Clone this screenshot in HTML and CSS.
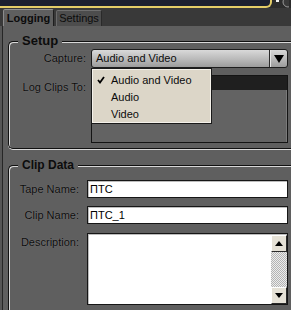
FILE: index.html
```html
<!DOCTYPE html>
<html lang="en">
<head>
    <meta charset="UTF-8">
    <title>Logging</title>
    <link rel="stylesheet" href="styles.css">
</head>
<body>
<div class="top">
    <div class="top-frame"></div>
    <div class="top-ctl">
        <svg width="17" height="8" viewBox="0 0 17 8">
            <rect x="4" y="0" width="3" height="2" fill="#f2f2f2"/>
            <circle cx="16" cy="2" r="5" fill="#3a3a3a" stroke="#9a9a9a" stroke-width="1"/>
        </svg>
    </div>
</div>

<div class="tabs">
    <div class="tab active">Logging</div>
    <div class="tab">Settings</div>
</div>

<div class="panel">
    <div class="group setup">
        <div class="legend">Setup</div>
        <div class="row">
            <div class="lbl">Capture:</div>
            <div class="select">
                <span class="select-text">Audio and Video</span>
                <span class="select-btn"><span class="tri-down"></span></span>
                <div class="menu">
                    <div class="item"><span class="check">
                        <svg width="8" height="8" viewBox="0 0 8 8"><polyline points="1,4 3,6.5 7,1" fill="none" stroke="#000" stroke-width="1.8"/></svg>
                    </span>Audio and Video</div>
                    <div class="item"><span class="check"></span>Audio</div>
                    <div class="item"><span class="check"></span>Video</div>
                </div>
            </div>
        </div>
        <div class="row log">
            <div class="lbl">Log Clips To:</div>
            <div class="clipbox"><div class="clipbar"></div></div>
        </div>
    </div>

    <div class="group clip">
        <div class="legend">Clip Data</div>
        <div class="row">
            <div class="lbl">Tape Name:</div>
            <div class="field">ПТС</div>
        </div>
        <div class="row">
            <div class="lbl">Clip Name:</div>
            <div class="field">ПТС_1</div>
        </div>
        <div class="row desc">
            <div class="lbl">Description:</div>
            <div class="area">
                <div class="area-text"></div>
                <div class="scroll">
                    <div class="sbtn"><span class="tri-s up"></span></div>
                    <div class="track"></div>
                    <div class="sbtn"><span class="tri-s down"></span></div>
                </div>
            </div>
        </div>
    </div>
</div>
</body>
</html>
```

FILE: styles.css
```css
* {
    box-sizing: border-box;
}

html, body {
    margin: 0;
    width: 291px;
    height: 310px;
    overflow: hidden;
}

body {
    background-color: #565656;
    font-family: "Liberation Sans", Arial, sans-serif;
    font-size: 11px;
    color: #0c0c0c;
}

/* top strip */
.top {
    display: flex;
    height: 8px;
    background-color: #2c2c2c;
}

.top-frame {
    width: 272px;
    height: 8px;
    background-color: #1c2030;
    border-bottom: 2px solid #e4cd68;
    border-right: 2px solid #e4cd68;
    border-bottom-right-radius: 6px;
}

.top-ctl {
    flex: 1;
    display: flex;
    overflow: hidden;
}

/* tabs */
.tabs {
    display: flex;
    align-items: flex-end;
    gap: 2px;
    height: 18px;
    padding-left: 3px;
    background-color: #393939;
}

.tab {
    width: 46px;
    height: 16px;
    line-height: 15px;
    text-align: center;
    background-color: #4d4d4d;
    border-top: 1px solid #6e6e6e;
    border-left: 1px solid #6a6a6a;
    border-right: 1px solid #2a2a2a;
    border-radius: 2px 2px 0 0;
}

.tab.active {
    width: 51px;
    height: 17px;
    line-height: 16px;
    font-weight: bold;
    background-color: #5f5f5f;
    border-top-color: #939393;
    border-left-color: #8c8c8c;
    border-right-color: #1e1e1e;
}

/* panel */
.panel {
    width: 289px;
    height: 284px;
    margin-left: 2px;
    padding-top: 15px;
    padding-left: 5px;
    background-color: #5f5f5f;
    border-left: 1px solid #262626;
}

.group {
    border: 1px solid #111;
    border-right: none;
    border-radius: 5px 0 0 5px;
    box-shadow: inset 1px 1px 0 #d8d8d8, 0 1px 0 #d8d8d8;
    background-color: #5f5f5f;
}

.setup {
    padding-bottom: 5px;
}

.clip {
    margin-top: 16px;
    height: 160px;
    border-bottom: none;
    border-bottom-left-radius: 0;
}

.legend {
    width: max-content;
    height: 14px;
    margin: -8px 0 0 9px;
    padding: 0 4px;
    line-height: 14px;
    font-size: 12px;
    font-weight: bold;
    background-color: #5f5f5f;
}

.setup .legend {
    font-size: 13px;
}

.row {
    display: flex;
    gap: 5px;
    margin-top: 1px;
}

.lbl {
    width: 77px;
    line-height: 19px;
    text-align: right;
    text-shadow: 0 0 1px rgba(255, 255, 255, 0.25);
}

.row.log {
    margin-top: 7px;
}

.row.log .lbl {
    padding-top: 5px;
    line-height: 14px;
}

/* dropdown */
.select {
    position: relative;
    display: flex;
    width: 197px;
    height: 19px;
    border: 1px solid #1d1d1d;
    border-radius: 3px;
    background: linear-gradient(#d9d9d9, #b9b9b9 55%, #9c9c9c);
}

.select-text {
    flex: 1;
    padding-left: 4px;
    line-height: 17px;
}

.select-btn {
    display: flex;
    align-items: center;
    justify-content: center;
    width: 18px;
    border-left: 1px solid #2a2a2a;
    box-shadow: inset 1px 0 0 #e6e6e6;
}

.tri-down {
    width: 0;
    height: 0;
    border-left: 5px solid transparent;
    border-right: 5px solid transparent;
    border-top: 8px solid #000;
}

.menu {
    position: absolute;
    top: 18px;
    left: -1px;
    width: 121px;
    height: 56px;
    padding-top: 2px;
    background-color: #dcd6c8;
    border: 1px solid #1a1a1a;
    box-shadow: inset 1px 1px 0 #f4f1ea, inset -1px -1px 0 #f4f1ea;
    z-index: 2;
}

.item {
    display: flex;
    align-items: center;
    height: 17px;
    padding-left: 5px;
}

.check {
    display: flex;
    width: 14px;
}

/* log clips box */
.clipbox {
    width: 197px;
    height: 68px;
    border: 1px solid #141414;
    background-color: #636363;
    box-shadow: inset -1px 0 0 #7a7a7a;
}

.clipbar {
    height: 14px;
    background-color: #1f1f1f;
}

/* clip data */
.clip .row {
    gap: 8px;
    margin-top: 8px;
}

.clip .lbl {
    width: 70px;
    line-height: 18px;
}

.field {
    width: 201px;
    height: 18px;
    padding-left: 2px;
    line-height: 16px;
    background-color: #fff;
    border: 1px solid #161616;
    box-shadow: inset 1px 1px 0 #bdbdbd;
    color: #000;
}

.clip .row.desc {
    margin-top: 9px;
}

.clip .desc .lbl {
    padding-top: 2px;
    line-height: 14px;
}

.area {
    display: flex;
    width: 201px;
    height: 72px;
    padding: 1px 0 0 1px;
    background-color: #fff;
    border: 1px solid #161616;
    box-shadow: inset 1px 1px 0 #bdbdbd;
}

.area-text {
    flex: 1;
}

.scroll {
    display: flex;
    flex-direction: column;
    width: 16px;
}

.sbtn {
    display: flex;
    align-items: center;
    justify-content: center;
    height: 17px;
    background-color: #e5e1d6;
    border-top: 1px solid #fff;
    border-left: 1px solid #fff;
    border-right: 1px solid #2a2a2a;
    border-bottom: 1px solid #2a2a2a;
}

.track {
    flex: 1;
    background-color: #d6d6d6;
    background-image: repeating-conic-gradient(#b4b4b4 0 25%, #ececec 0 50%);
    background-size: 2px 2px;
}

.tri-s {
    width: 0;
    height: 0;
    border-left: 4px solid transparent;
    border-right: 4px solid transparent;
}

.tri-s.up {
    border-bottom: 5px solid #000;
}

.tri-s.down {
    border-top: 5px solid #000;
}
```
